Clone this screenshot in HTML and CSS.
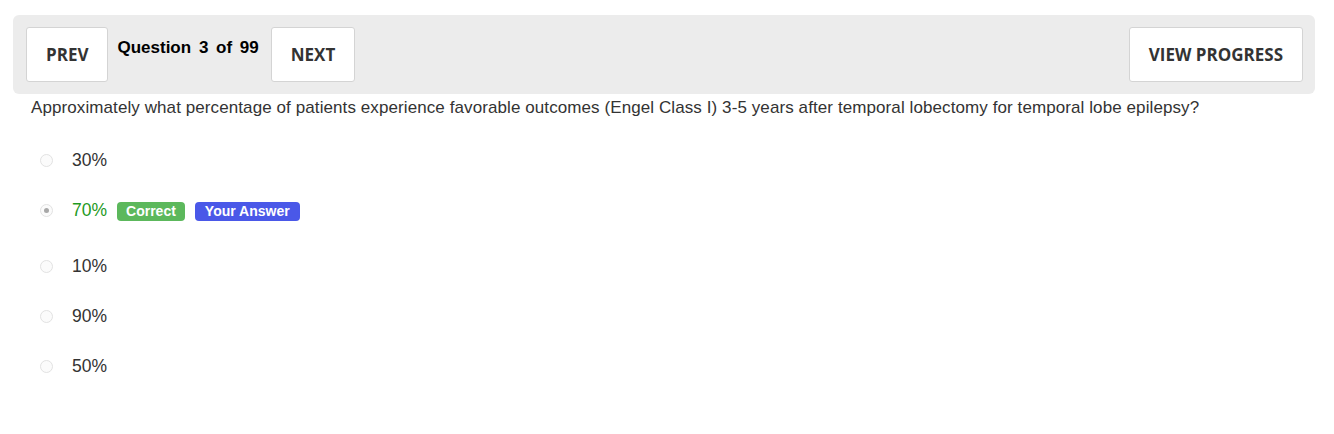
FILE: index.html
```html
<!DOCTYPE html>
<html lang="en">
<head>
<meta charset="utf-8">
<title>Question 3 of 99</title>
<link rel="stylesheet" href="styles.css">
</head>
<body>
<div class="wrap">
  <div class="toolbar">
    <button class="btn">PREV</button>
    <div class="qlabel"><span>Question</span> <span>3</span> <span>of</span> <span>99</span></div>
    <button class="btn">NEXT</button>
    <div class="spacer"></div>
    <button class="btn">VIEW PROGRESS</button>
  </div>
  <p class="question">Approximately what percentage of patients experience favorable outcomes (Engel Class I) 3-5 years after temporal lobectomy for temporal lobe epilepsy?</p>
  <ul class="options">
    <li class="option"><span class="radio"></span><span class="opt-text">30%</span></li>
    <li class="option option-answered"><span class="radio radio-checked"></span><span class="opt-text opt-correct">70%</span><span class="badge badge-green">Correct</span><span class="badge badge-blue">Your Answer</span></li>
    <li class="option"><span class="radio"></span><span class="opt-text">10%</span></li>
    <li class="option"><span class="radio"></span><span class="opt-text">90%</span></li>
    <li class="option"><span class="radio"></span><span class="opt-text">50%</span></li>
  </ul>
</div>
</body>
</html>
```

FILE: styles.css
```css
* { box-sizing: border-box; }
body {
  margin: 0;
  background: #fff;
  font-family: "Liberation Sans", Arial, sans-serif;
  color: #333;
}
.wrap {
  padding: 15px 19px 0 13px;
}
.toolbar {
  display: flex;
  align-items: flex-start;
  background: #ececec;
  border-radius: 6px;
  padding: 12px 12px 12px 13px;
}
.btn {
  height: 55px;
  padding: 0 19px;
  border: 1px solid #d4d4d4;
  border-radius: 3px;
  background: #fff;
  font-family: "Open Sans", sans-serif;
  font-weight: 700;
  font-size: 17px;
  color: #333;
}
.qlabel {
  margin: 0 12px 0 9px;
  padding-top: 11px;
  font-family: "Liberation Sans", Arial, sans-serif;
  font-weight: 700;
  font-size: 17px;
  line-height: 19px;
  color: #000;
  word-spacing: 3px;
}
.spacer { flex: 1; }
.question {
  margin: 4px 0 0 18px;
  font-size: 17px;
  line-height: 19px;
  letter-spacing: 0.09px;
  color: #333;
}
.options {
  list-style: none;
  margin: 33px 0 0 0;
  padding: 0 0 0 27px;
}
.option {
  display: flex;
  align-items: center;
  height: 20px;
  margin-bottom: 30px;
}
.option-answered {
  align-items: baseline;
  margin-bottom: 36px;
}
.radio {
  width: 13px;
  height: 13px;
  border: 1px solid #e2e2e2;
  border-radius: 50%;
  background: #fbfbfb;
  margin-right: 19px;
  flex: none;
  display: flex;
  align-items: center;
  justify-content: center;
}
.option-answered .radio { align-self: center; }
.radio-checked::after {
  content: "";
  width: 5px;
  height: 5px;
  border-radius: 50%;
  background: #a8a8a8;
}
.opt-text {
  font-size: 17.5px;
  line-height: 20px;
  color: #333;
}
.opt-correct {
  color: #1f9a1f;
}
.badge {
  display: inline-block;
  font-weight: 700;
  font-size: 14px;
  line-height: 19px;
  color: #fff;
  border-radius: 4px;
  padding: 0 9px;
  margin-left: 10px;
}
.badge-green { background: #5cb85c; }
.badge-blue { background: #4a58e8; padding: 0 10px; }
```
